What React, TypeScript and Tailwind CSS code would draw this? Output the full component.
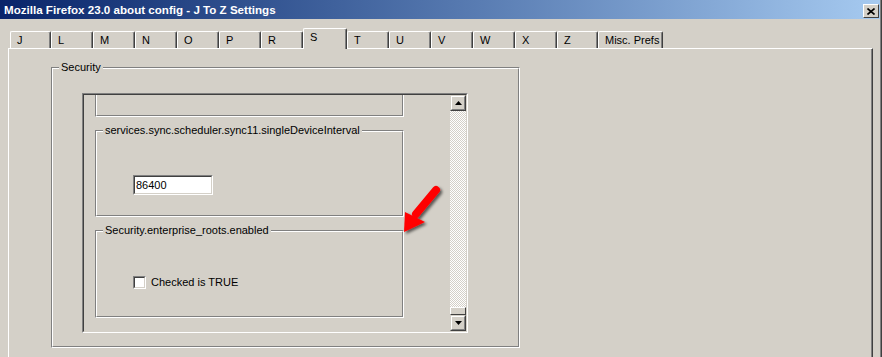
import React from 'react';

const tabs = ['J', 'L', 'M', 'N', 'O', 'P', 'R', 'S', 'T', 'U', 'V', 'W', 'X', 'Z', 'Misc. Prefs'];

// classic etched frame with a caption sitting on the top line
function GroupBox({ label, className, children }: { label?: string; className: string; children?: React.ReactNode }) {
  return (
    <div className={`relative border-t border-l border-t-[#808080] border-l-[#808080] border-r border-b border-r-white border-b-white ${className}`}>
      <div className="h-full border-t border-l border-t-white border-l-white border-r border-b border-r-[#808080] border-b-[#808080]">
        {children}
      </div>
      {label && (
        <span className="absolute top-[-7px] left-[7px] px-[2px] bg-[#d4d0c8] text-[11px] leading-[13px] text-black whitespace-nowrap">
          {label}
        </span>
      )}
    </div>
  );
}

function Sunken({ className, inner, children }: { className: string; inner?: string; children?: React.ReactNode }) {
  return (
    <div className={`border-t border-l border-t-[#808080] border-l-[#808080] border-r border-b border-r-white border-b-white ${className}`}>
      <div className={`h-full border-t border-l border-t-[#404040] border-l-[#404040] border-r border-b border-r-[#d4d0c8] border-b-[#d4d0c8] ${inner ?? ''}`}>
        {children}
      </div>
    </div>
  );
}

function ScrollButton({ down }: { down?: boolean }) {
  return (
    <div className="w-[16px] h-[16px] border-t border-l border-t-[#d4d0c8] border-l-[#d4d0c8] border-r border-b border-r-[#404040] border-b-[#404040]">
      <div className="w-full h-full border-t border-l border-t-white border-l-white border-r border-b border-r-[#808080] border-b-[#808080] flex items-center justify-center bg-[#d4d0c8]">
        <svg width="7" height="4" viewBox="0 0 7 4">
          {down ? <polygon points="0,0 7,0 3.5,4" fill="#000" /> : <polygon points="3.5,0 7,4 0,4" fill="#000" />}
        </svg>
      </div>
    </div>
  );
}

export default function App() {
  return (
    <div className="w-[882px] h-[357px] overflow-hidden bg-[#d4d0c8] border-r border-r-[#404040] font-['Liberation_Sans',Arial,sans-serif] text-black">
      <div className="h-full border-r border-r-[#808080] flex flex-col">
        {/* title bar */}
        <div className="h-[19px] shrink-0 flex items-start justify-between bg-gradient-to-r from-[#0a246a] to-[#a6caf0]">
          <span className="pl-[4px] pt-[3px] text-[11.6px] leading-[13px] font-bold text-white whitespace-nowrap">
            Mozilla Firefox 23.0 about config - J To Z Settings
          </span>
          <div className="mt-[4px] mr-[1px] w-[16px] h-[14px] border-t border-l border-t-white border-l-white border-r border-b border-r-[#404040] border-b-[#404040] bg-[#d4d0c8] flex items-center justify-center">
            <svg width="8" height="7" viewBox="0 0 8 7">
              <path d="M0.5 0.5 L7.5 6.5 M7.5 0.5 L0.5 6.5" stroke="#000" strokeWidth="1.6" />
            </svg>
          </div>
        </div>

        {/* tab strip */}
        <div className="h-[29px] shrink-0 flex items-end pl-[10px]">
          {tabs.map((t) => {
            const sel = t === 'S';
            const w = t === 'Misc. Prefs' ? 'w-[65px]' : sel ? 'w-[44px]' : t === 'J' || t === 'Z' ? 'w-[41px]' : 'w-[42px]';
            return (
              <div
                key={t}
                className={`${w} ${sel ? 'h-[21px] -mb-[1px] relative z-10' : 'h-[17px]'} flex items-start pt-[2px] bg-[#d4d0c8] border-t border-l border-t-white border-l-white border-r border-r-[#404040] shadow-[inset_-1px_0_0_#808080] rounded-t-[2px] pl-[6px]`}
              >
                <span className="text-[11px] leading-[13px] whitespace-nowrap">{t}</span>
              </div>
            );
          })}
        </div>

        {/* tab page */}
        <div className="flex-1 ml-[8px] w-[865px] border-t border-l border-t-white border-l-white border-r border-r-[#404040] shadow-[inset_-1px_0_0_#808080]">
          <GroupBox label="Security" className="ml-[42px] mt-[18px] w-[469px] h-[281px]">
            <Sunken className="ml-[29px] mt-[24px] w-[386px] h-[240px]" inner="flex">
              <div className="relative flex-1 overflow-hidden">
                <div className="pl-[11px] mt-[-65px] flex flex-col gap-[13px]">
                  <GroupBox className="w-[309px] h-[87px]" />
                  <GroupBox label="services.sync.scheduler.sync11.singleDeviceInterval" className="w-[309px] h-[87px]">
                    <Sunken className="ml-[36px] mt-[43px] w-[80px] h-[20px]" inner="bg-white pl-[1px] text-[11px] leading-[16px]">
                      86400
                    </Sunken>
                  </GroupBox>
                  <GroupBox label="Security.enterprise_roots.enabled" className="w-[309px] h-[88px]">
                    <div className="ml-[36px] mt-[44px] flex items-center gap-[5px]">
                      <Sunken className="w-[13px] h-[13px]" inner="bg-white" />
                      <span className="text-[11px] leading-[13px]">Checked is TRUE</span>
                    </div>
                  </GroupBox>
                </div>
              </div>
              {/* scrollbar */}
              <div className="w-[16px] flex flex-col">
                <ScrollButton />
                <div className="flex-1 bg-[repeating-conic-gradient(#d4d0c8_0_25%,#ffffff_0_50%)] [background-size:2px_2px]" />
                <div className="h-[8px] border-t border-l border-t-white border-l-white border-r border-b border-r-[#404040] border-b-[#404040] bg-[#d4d0c8]" />
                <ScrollButton down />
              </div>
            </Sunken>
          </GroupBox>
        </div>
      </div>

      {/* red annotation arrow */}
      <svg className="absolute left-[398px] top-[180px]" width="50" height="58" viewBox="0 0 50 58">
        <defs>
          <filter id="sh" x="-30%" y="-30%" width="160%" height="160%">
            <feDropShadow dx="2" dy="2" stdDeviation="1.5" floodColor="#000" floodOpacity="0.6" />
          </filter>
        </defs>
        <g filter="url(#sh)">
          <line x1="38" y1="10" x2="18" y2="34" stroke="#ff0000" strokeWidth="8" strokeLinecap="round" />
          <polygon points="6,52 7,32 27,42" fill="#ff0000" />
        </g>
      </svg>
    </div>
  );
}
